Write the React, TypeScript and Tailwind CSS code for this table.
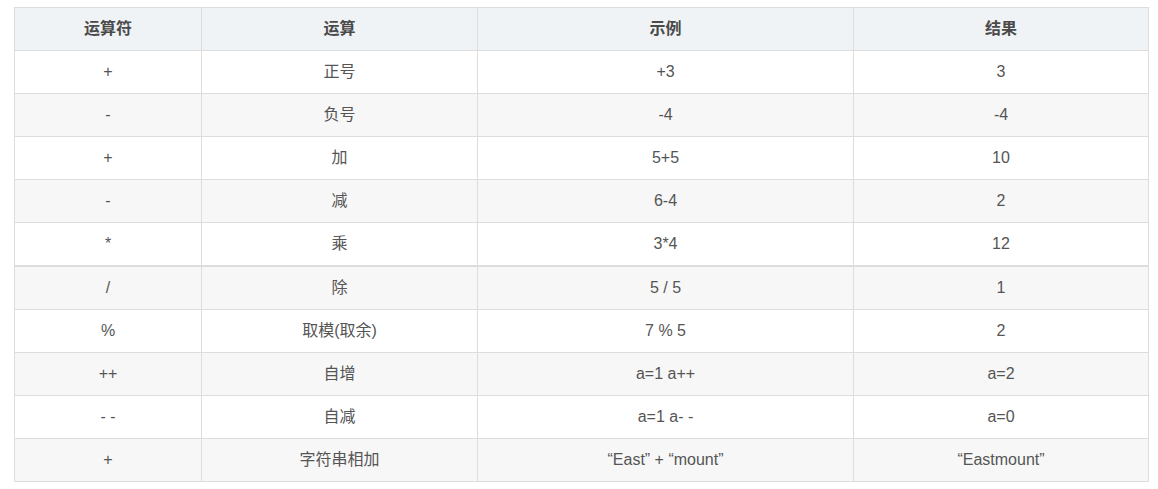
import React from "react";

const rows: [string, string, string, string][] = [
  ["+", "正号", "+3", "3"],
  ["-", "负号", "-4", "-4"],
  ["+", "加", "5+5", "10"],
  ["-", "减", "6-4", "2"],
  ["*", "乘", "3*4", "12"],
  ["/", "除", "5 / 5", "1"],
  ["%", "取模(取余)", "7 % 5", "2"],
  ["++", "自增", "a=1 a++", "a=2"],
  ["- -", "自减", "a=1 a- -", "a=0"],
  ["+", "字符串相加", "\u201cEast\u201d + \u201cmount\u201d", "\u201cEastmount\u201d"],
];

const widths = ["w-[187px]", "w-[276px]", "w-[376px]", "w-[295px]"];

export default function App() {
  return (
    <div
      className="w-[1158px] h-[489px] bg-white pt-[7px] pl-[14px]"
      style={{ fontFamily: '"Liberation Sans", Arial, "Noto Sans CJK SC", sans-serif' }}
    >
      <div className="w-[1135px] border-l border-t border-[#dddddd] text-[16px] leading-[20px]">
        <div className="flex h-[43px] bg-[#eff3f5] font-bold text-[#4a4a4a]">
          {["运算符", "运算", "示例", "结果"].map((h, i) => (
            <div
              key={i}
              className={`${widths[i]} flex items-center justify-center border-r border-b border-[#dddddd] pb-px`}
            >
              {h}
            </div>
          ))}
        </div>
        {rows.map((r, ri) => (
          <div
            key={ri}
            className={`flex ${ri === 4 ? "h-[44px]" : "h-[43px]"} ${ri % 2 === 1 ? "bg-[#f7f7f7]" : "bg-white"} text-[#555]`}
          >
            {r.map((c, ci) => (
              <div
                key={ci}
                className={`${widths[ci]} flex items-center justify-center border-r border-[#dddddd] pb-px ${ri === 4 ? "border-b-2" : "border-b"}`}
              >
                {c}
              </div>
            ))}
          </div>
        ))}
      </div>
    </div>
  );
}
